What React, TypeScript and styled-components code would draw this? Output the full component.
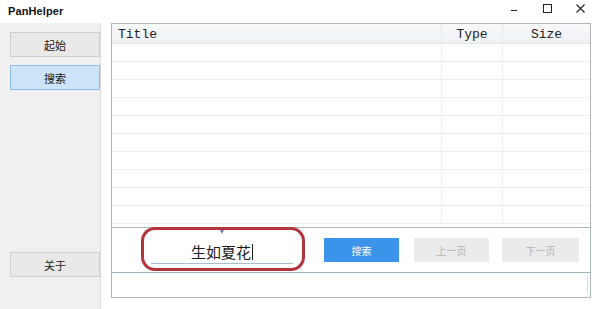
import styled, { createGlobalStyle } from 'styled-components';

const GlobalStyle = createGlobalStyle`
  html, body {
    margin: 0;
    padding: 0;
    background: #ffffff;
  }
  * {
    box-sizing: border-box;
  }
`;

const cjk = `"Microsoft YaHei", "Noto Sans CJK SC", "Noto Sans", sans-serif`;

const Window = styled.div`
  width: 600px;
  height: 309px;
  display: flex;
  flex-direction: column;
  background: #ffffff;
  font-family: ${cjk};
  overflow: hidden;
`;

const TitleBar = styled.div`
  height: 23px;
  flex-shrink: 0;
  display: flex;
  align-items: center;
  padding-left: 8px;
  background: #ffffff;
`;

const AppName = styled.div`
  font-family: "Liberation Sans", Arial, sans-serif;
  font-weight: bold;
  font-size: 11px;
  color: #111111;
  letter-spacing: 0.1px;
  flex: 1;
  margin-top: -2px;
`;

const Controls = styled.div`
  display: flex;
  align-items: center;
  height: 100%;
  padding-right: 3px;
`;

const ControlButton = styled.div`
  width: 33px;
  height: 23px;
  display: flex;
  align-items: center;
  justify-content: center;
  margin-top: -7px;
`;

const Body = styled.div`
  flex: 1;
  display: flex;
  min-height: 0;
`;

const Sidebar = styled.div`
  width: 101px;
  flex-shrink: 0;
  background: #f0f0f0;
  border-right: 1px solid #dcdcdc;
  display: flex;
  flex-direction: column;
  padding: 9px 0 32px 10px;
  gap: 8px;
`;

const NavButton = styled.div<{ $active?: boolean; $bottom?: boolean }>`
  width: 90px;
  height: 25px;
  display: flex;
  align-items: center;
  justify-content: center;
  font-size: 11px;
  color: #1a1a1a;
  background: ${(p) => (p.$active ? '#cce4f7' : '#e9e9e9')};
  border: 1px solid ${(p) => (p.$active ? '#8fbde9' : '#cfcfcf')};
  margin-top: ${(p) => (p.$bottom ? 'auto' : '0')};
`;

const Main = styled.div`
  flex: 1;
  display: flex;
  flex-direction: column;
  padding: 0 9px 10px 10px;
`;

const Table = styled.div`
  height: 205px;
  border: 1px solid #b4b4b4;
  display: flex;
  flex-direction: column;
  overflow: hidden;
`;

const HeaderRow = styled.div`
  height: 20px;
  flex-shrink: 0;
  display: grid;
  grid-template-columns: 330px 61px 1fr;
  background: linear-gradient(#f7f9fb, #eff2f5);
  border-bottom: 1px solid #e4e7ea;
`;

const HeaderCell = styled.div<{ $center?: boolean }>`
  font-family: "Liberation Mono", "DejaVu Sans Mono", monospace;
  font-size: 13px;
  color: #222222;
  display: flex;
  align-items: center;
  padding-top: 2px;
  justify-content: ${(p) => (p.$center ? 'center' : 'flex-start')};
  padding-left: ${(p) => (p.$center ? '0' : '6px')};
  border-right: 1px solid #e6e9ec;
  &:last-child {
    border-right: none;
  }
`;

const Row = styled.div`
  height: 18px;
  flex-shrink: 0;
  display: grid;
  grid-template-columns: 330px 61px 1fr;
  border-bottom: 1px solid #eceef0;
`;

const Cell = styled.div`
  border-right: 1px solid #eef0f2;
  &:last-child {
    border-right: none;
  }
`;

const SearchPanel = styled.div`
  position: relative;
  height: 45px;
  flex-shrink: 0;
  border: 1px solid #a9bac6;
  border-top: none;
  display: flex;
  align-items: center;
  padding-left: 39px;
`;

const InputField = styled.div`
  width: 142px;
  height: 24px;
  border-bottom: 1px solid #a8bfd3;
  display: flex;
  align-items: flex-end;
  justify-content: center;
  padding-bottom: 1px;
  margin-top: 4px;
  font-size: 15px;
  color: #1a1a1a;
`;

const Caret = styled.span`
  display: inline-block;
  width: 1px;
  height: 16px;
  background: #1a1a1a;
  margin-left: 1px;
  margin-bottom: 2px;
`;

const Pointer = styled.div`
  position: absolute;
  left: 107px;
  top: 0;
  width: 0;
  height: 0;
  border-left: 3px solid transparent;
  border-right: 3px solid transparent;
  border-top: 6px solid #6d7fb8;
`;

const Highlight = styled.div`
  position: absolute;
  left: 29px;
  top: -1px;
  width: 164px;
  height: 44px;
  border: 3px solid #b3343d;
  border-radius: 14px;
  pointer-events: none;
`;

const ActionButton = styled.div<{ $primary?: boolean; $gap: number; $width?: number }>`
  width: ${(p) => p.$width ?? 75}px;
  height: 24px;
  margin-left: ${(p) => p.$gap}px;
  display: flex;
  align-items: center;
  justify-content: center;
  font-size: 10px;
  color: ${(p) => (p.$primary ? '#ffffff' : '#b4b4b4')};
  background: ${(p) => (p.$primary ? '#3c93ea' : '#ebebeb')};
`;

const Footer = styled.div`
  height: 26px;
  flex-shrink: 0;
  border: 1px solid #a9bac6;
  border-top: 1px solid #9fb2c0;
  margin-top: -1px;
  position: relative;
`;

const ScrollStub = styled.div`
  position: absolute;
  right: 2px;
  top: 2px;
  bottom: 4px;
  width: 1px;
  background: #d8dde2;
`;

const rows = Array.from({ length: 10 });

export default function App() {
  return (
    <Window>
      <GlobalStyle />
      <TitleBar>
        <AppName>PanHelper</AppName>
        <Controls>
          <ControlButton>
            <svg width="9" height="9" viewBox="0 0 9 9">
              <line x1="1" y1="6.5" x2="7" y2="6.5" stroke="#222" strokeWidth="1" />
            </svg>
          </ControlButton>
          <ControlButton>
            <svg width="9" height="9" viewBox="0 0 9 9">
              <rect x="0.5" y="0.5" width="8" height="8" fill="none" stroke="#222" strokeWidth="1" />
            </svg>
          </ControlButton>
          <ControlButton>
            <svg width="9" height="9" viewBox="0 0 9 9">
              <path d="M0.5 0.5 L8.5 8.5 M8.5 0.5 L0.5 8.5" stroke="#222" strokeWidth="1.1" />
            </svg>
          </ControlButton>
        </Controls>
      </TitleBar>
      <Body>
        <Sidebar>
          <NavButton>起始</NavButton>
          <NavButton $active>搜索</NavButton>
          <NavButton $bottom>关于</NavButton>
        </Sidebar>
        <Main>
          <Table>
            <HeaderRow>
              <HeaderCell>Title</HeaderCell>
              <HeaderCell $center>Type</HeaderCell>
              <HeaderCell $center>Size</HeaderCell>
            </HeaderRow>
            {rows.map((_, i) => (
              <Row key={i}>
                <Cell />
                <Cell />
                <Cell />
              </Row>
            ))}
          </Table>
          <SearchPanel>
            <Pointer />
            <Highlight />
            <InputField>
              生如夏花
              <Caret />
            </InputField>
            <ActionButton $primary $gap={31}>搜索</ActionButton>
            <ActionButton $gap={15}>上一页</ActionButton>
            <ActionButton $gap={13} $width={77}>下一页</ActionButton>
          </SearchPanel>
          <Footer>
            <ScrollStub />
          </Footer>
        </Main>
      </Body>
    </Window>
  );
}
